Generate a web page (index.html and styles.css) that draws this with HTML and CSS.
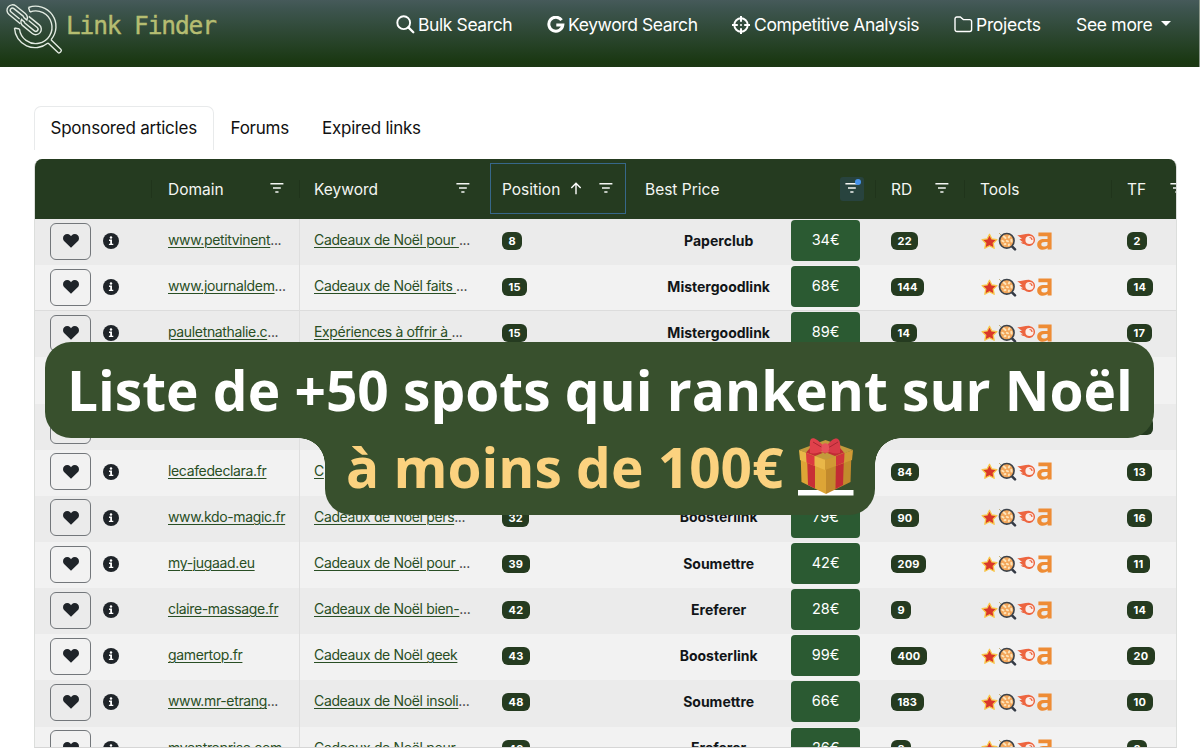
FILE: index.html
```html
<!DOCTYPE html>
<html lang="fr">
<head>
<meta charset="utf-8">
<title>Link Finder</title>
<link rel="stylesheet" href="styles.css">
</head>
<body>
<svg class="defs" width="0" height="0" aria-hidden="true">
  <symbol id="filter" viewBox="0 0 14 12"><path d="M0.4 1.7H13.4M3 5.9H10.8M5.3 10.1H8.5" stroke="currentColor" stroke-width="1.5" fill="none"/></symbol>
  <symbol id="heart" viewBox="0 0 16 14"><path d="M8 13.7 1.3 7.3C-.4 5.600-.4 2.900 1.200 1.300 2.900-.3 5.600-.3 7.200 1.300L8 2.200 8.800 1.300C10.400-.3 13.100-.3 14.800 1.300 16.400 2.900 16.400 5.600 14.700 7.300Z" fill="currentColor"/></symbol>
  <symbol id="info" viewBox="0 0 16 16"><circle cx="8" cy="8" r="8" fill="#1f2429"/><circle cx="8" cy="4.500" r="1.200" fill="#fff"/><path d="M6 6.600H9V10.700H10.300V12H5.900V10.700H7.200V7.900H6Z" fill="#fff"/></symbol>
  <symbol id="star" viewBox="0 0 16 16"><path d="M8 1.200 10.200 5.600 15 6.200 11.500 9.600 12.400 14.400 8 12 3.600 14.400 4.500 9.600 1 6.200 5.800 5.600Z" fill="#d9372a" stroke="#f8c648" stroke-width="1.200" stroke-linejoin="round"/></symbol>
  <symbol id="lens" viewBox="0 0 19 19"><path d="M13.500 13.800 17 17.300" stroke="#343a45" stroke-width="2.600" stroke-linecap="round"/><circle cx="8.800" cy="8.800" r="7.300" fill="#f3a65a" stroke="#3d434a" stroke-width="1.600"/><path d="M5.800 4.500 7.500 6M11.500 4.300 10.800 5.500M4.300 8.800 5.500 9.500M8.800 8.800 10 9.300M13.300 7.800 13.500 9.500M6.500 12.300 7.500 12M10.800 13.200 11 12.500" stroke="#fde3b8" stroke-width="2" stroke-linecap="round"/><path d="M1 1 3 3" stroke="#b8a060" stroke-width=".8"/></symbol>
  <symbol id="comet" viewBox="0 0 19 14"><path d="M.2 2.200C4.500 2.400 8 .6 12.600 .9A6.100 6.100 0 1 1 7.600 11.300C6.200 11 4.800 10.300 3.600 9.400L6 9.300C4.600 8.400 3.300 7.300 2.300 6L5 6.100C3.500 4.500 1.900 3.300.2 2.200Z" fill="#ed6540"/><circle cx="12.500" cy="7" r="4.100" fill="#fbeee9"/><path d="M12.500 4.500A2.500 2.500 0 0 1 15 7" stroke="#ed6540" stroke-width="1.200" fill="none"/></symbol>
  <symbol id="amark" viewBox="0 0 15 18"><path d="M1.400 .6H14.600V17.400H10.600V16.100C9.200 17.300 7.700 17.800 5.900 17.800 2.400 17.800.2 15.700.2 12.500.2 8.800 2.900 6.900 7.200 6.900H10.500V4.200H1.400ZM10.500 10H7.800C5.500 10 4.300 10.700 4.300 12.300 4.300 13.700 5.200 14.500 6.700 14.500 8.400 14.500 9.800 13.800 10.500 12.900Z" fill="#ee8c35" fill-rule="evenodd"/></symbol>
</svg>

<header class="topbar">
  <a class="brand">
    <svg class="brand-logo" width="58" height="51" viewBox="0 0 58 51" fill="none" stroke="#e3ebe2" stroke-width="1.400">
      <path d="M22.500 3.500A20.300 20.300 0 0 1 45 35.800M42 39A20.500 20.500 0 0 1 8.500 24"/>
      <path d="M24 8A16.300 16.300 0 1 1 13.500 25M22.500 3.500 24 8M8.500 24 13.500 25"/>
      <path d="M42 39 52 48.500C53.500 49.800 56.300 47 55 45.500L45 35.800" stroke-linejoin="round"/>
      <g transform="translate(6.500 6.300) rotate(39)">
        <path d="M14.500 5.500H0A5.500 5.500 0 0 1 0-5.500H12A5.500 5.500 0 0 1 17.300-1.500H13.500A2.300 2.300 0 0 0 12-2.200H0A2.200 2.200 0 0 0 0 2.200H11"/>
        <path d="M16.500-5.500H30A5.500 5.500 0 0 1 30 5.500H18A5.500 5.500 0 0 1 12.700 1.500H16.500A2.300 2.300 0 0 0 18 2.200H30A2.200 2.200 0 0 0 30-2.200H19"/>
      </g>
    </svg>
    <span class="brand-name">Link Finder</span>
  </a>
  <nav class="nav">
    <a class="nav-item bulk"><svg width="19" height="19" viewBox="0 0 19 19"><circle cx="7.700" cy="7.700" r="6.400" fill="none" stroke="#fff" stroke-width="1.900"/><path d="M12.400 12.400 17.300 17.300" stroke="#fff" stroke-width="2.300" stroke-linecap="round"/></svg><span>Bulk Search</span></a>
    <a class="nav-item kw"><svg width="18" height="18" viewBox="0 0 18 18"><path d="M14.600 4.200A7 7 0 1 0 15.800 9.100H9.300" fill="none" stroke="#fff" stroke-width="3"/></svg><span>Keyword Search</span></a>
    <a class="nav-item comp"><svg width="18" height="18" viewBox="0 0 18 18" fill="none" stroke="#fff"><circle cx="9" cy="9" r="6.700" stroke-width="1.900"/><path d="M9 0V5.800M9 12.200V18M0 9H5.800M12.200 9H18" stroke-width="2"/><circle cx="9" cy="9" r="1" fill="#fff" stroke="none"/></svg><span>Competitive Analysis</span></a>
    <a class="nav-item proj"><svg width="19" height="17" viewBox="0 0 19 17"><path d="M1 3A1.900 1.900 0 0 1 2.900 1H6.300L9.300 3.600H15.700A2 2 0 0 1 17.600 5.600V13.500A2 2 0 0 1 15.700 15.500H3A2 2 0 0 1 1 13.500Z" fill="none" stroke="#fff" stroke-width="1.400"/></svg><span>Projects</span></a>
    <a class="nav-item more"><span>See more</span><i class="caret"></i></a>
  </nav>
</header>

<main class="page">
  <div class="tabs">
    <a class="tab active"><span>Sponsored articles</span></a>
    <a class="tab"><span>Forums</span></a>
    <a class="tab"><span>Expired links</span></a>
  </div>

  <section class="grid">
    <div class="grid-head">
      <div class="hcell"></div>
      <div class="hcell"><span>Domain</span><svg class="filter"><use href="#filter"/></svg></div>
      <div class="hcell"><span>Keyword</span><svg class="filter"><use href="#filter"/></svg></div>
      <div class="hcell sorted"><span>Position</span><svg class="arrow" width="12" height="13" viewBox="0 0 12 13"><path d="M6 12.300V1.300M1.300 6 6 1.300 10.700 6" fill="none" stroke="#fff" stroke-width="1.400"/></svg><svg class="filter"><use href="#filter"/></svg></div>
      <div class="hcell"><span>Best Price</span><div class="filter-on"><svg class="filter"><use href="#filter"/></svg></div></div>
      <div class="hcell"><span>RD</span><svg class="filter"><use href="#filter"/></svg></div>
      <div class="hcell"><span>Tools</span></div>
      <div class="hcell"><span>TF</span><svg class="filter"><use href="#filter"/></svg></div>
    </div>
    <div class="grid-body" id="rows"></div>
  </section>
</main>

<div class="banner">
  <div class="banner-top">Liste de +50 spots qui rankent sur Noël</div>
  <div class="banner-bottom">
    <span>à moins de 100€</span>
    <svg class="gift" width="56" height="58" viewBox="0 0 56 58">
      <rect x="0" y="52" width="55.500" height="5.500" fill="#fff"/>
      <path d="M1 12 27.500 2 55 12 28 23Z" fill="#c39a3c"/>
      <path d="M2.500 13 28 22V56L3.500 44Z" fill="#dda536"/>
      <path d="M53.500 13 28 22V56L52.500 44Z" fill="#c28a2c"/>
      <path d="M9 17 17 20V50.500L10 47Z" fill="#c82f36"/>
      <path d="M38 20 46 17 45 47 37.500 51Z" fill="#c32b34"/>
      <path d="M1 12 27 22V32L2 22Z" fill="#e9b748"/>
      <path d="M55 12 27 22V32L54 22Z" fill="#d09a34"/>
      <path d="M8 14.700 16.500 18V28L8.500 24.500Z" fill="#dc3a40"/>
      <path d="M38 18 46.500 14.700 46 24.500 38 28Z" fill="#d2343c"/>
      <path d="M12 10 27 15.500 42 10 46 14.500 37 18 27 14 17 18 8 14.500Z" fill="#c02c35"/>
      <path d="M26 9C20 1 15-1 13 1 11 3 12 12 12 15 16 16 22 15 26 12Z" fill="#e0414b"/>
      <path d="M28 9C34 0 39-1 41 2 43 5 42 13 42 15 37 16 32 15 28 12Z" fill="#d83b48"/>
      <path d="M15 4 25 10M40 4 30 10" stroke="#a92632" stroke-width="1"/>
      <ellipse cx="27.300" cy="10" rx="4" ry="4.800" fill="#e8525b"/>
    </svg>
  </div>
</div>
<script src="rows.js"></script>
</body>
</html>
```
FILE: styles.css
```css
* { box-sizing: border-box; }
html, body { margin: 0; height: 748px; overflow: hidden; }
body { position: relative; background: #fff; font-family: Inter, Roboto, sans-serif; color: #111; }
.defs { position: absolute; }

.topbar { height: 67px; display: flex; align-items: flex-start; background: linear-gradient(#465a5a 0, #3e5550 12%, #1a3812 92%, #1b3613 100%); color: #fff; border-right: 1px solid #8b988b; }
.brand { display: flex; width: 396px; padding: 4px 0 0 6px; }
.brand-name { margin-left: 2px; font: 24.500px/44px "DejaVu Sans Mono", monospace; letter-spacing: -1.130px; color: #b5bd71; -webkit-text-stroke: .4px #b5bd71; white-space: nowrap; }
.nav { display: flex; height: 49px; align-items: center; font-size: 17.500px; white-space: nowrap; }
.nav-item { display: flex; align-items: center; gap: 3px; flex: none; }
.nav-item span { letter-spacing: -.4px; }
.nav-item span { margin-top: -1px; }
.bulk { width: 151px; }
.kw { width: 185px; }
.comp { width: 222px; gap: 4px; }
.proj { width: 122px; }
.proj span, .more span { letter-spacing: -.3px; }
.caret { margin-left: 6px; margin-top: -2px; border: 5px solid transparent; border-top-color: #fff; border-bottom: 0; }

.page { padding: 39px 23px 0 34px; }
.tabs { display: flex; height: 44px; font-size: 17px; line-height: 40px; color: #111; white-space: nowrap; letter-spacing: -.23px; }
.tab { padding: 1px 15.500px; border: 1px solid transparent; border-bottom: 0; }
.tab.active { width: 180px; border-color: #e8eaeb; border-radius: 7px 7px 0 0; }
.tab span { display: block; }

.grid { margin-top: 9px; height: 589px; border: 1px solid #dcdedc; border-top: 0; border-radius: 8px 8px 0 0; overflow: hidden; border-bottom-color: #d6d6d6; }
.grid-head, .row { display: grid; grid-template-columns: 117px 148px 188px 142px 246px 89px 147px 80px; width: 1157px; }
.grid-head { height: 60px; background: #253b20; color: #f4f6f3; font-size: 15.500px; }
.hcell { display: flex; align-items: center; padding: 0 16px 0 15px; position: relative; }
.hcell:nth-child(2) { padding-left: 16px; }
.hcell:nth-child(3) { padding-left: 14px; }
.hcell:not(.sorted):not(:nth-child(3)):not(:last-child)::after { content: ""; position: absolute; right: 0; top: 21px; width: 1px; height: 18px; background: #20341b; }
.filter { width: 14px; height: 12px; margin-left: auto; flex: none; margin-top: -2px; }
.hcell:nth-child(3) .filter { margin-right: 2px; }
.hcell:nth-child(8) .filter { margin-right: -8px; }
.sorted { border: 1px solid #37678a; margin: 4px 4px 5px 2px; padding: 1px 12px 0 11px; }
.arrow { margin-left: 10px; margin-top: -2px; }
.filter-on { margin-left: auto; margin-right: -4px; width: 24px; height: 24px; border-radius: 3px; background: #28433e; position: relative; display: flex; align-items: center; justify-content: center; }
.filter-on .filter { margin: -2px 0 0; }
.filter-on::after { content: ""; position: absolute; right: 3px; top: 2px; width: 6px; height: 6px; border-radius: 50%; background: #4693ec; }

.row { height: 46.150px; background: #f2f2f2; font-size: 14px; }
.row:nth-child(odd) { background: #ebebeb; }
.row:nth-child(3) { box-shadow: 0 -1px #dcdcdc; }
.cell { display: flex; align-items: center; padding: 0 15px 2px; white-space: nowrap; }
.cell:nth-child(2), .cell:nth-child(3) { padding: 0 0 5px 16px; letter-spacing: -.35px; }
.cell:nth-child(2) { border-right: 1px solid #dedede; }
.cell:nth-child(3) { padding-left: 14px; }
.like { width: 41px; height: 37px; border: 1px solid #73777b; border-radius: 6px; display: flex; align-items: center; justify-content: center; color: #1f2429; }
.like svg { width: 16px; height: 14px; }
.info { width: 16px; height: 16px; margin-left: 12px; }
.link { color: #294e24; text-decoration: underline; text-decoration-thickness: 1px; text-underline-offset: 2px; white-space: pre; }
.dots { color: #333; }
.badge { height: 18px; min-width: 20px; padding: 0 6.500px; border-radius: 6px; background: #253b20; color: #fff; font-weight: 700; font-size: 11px; line-height: 18px; text-align: center; letter-spacing: .2px; }
.badge:empty { width: 26px; }
.pos .badge { margin-left: -1px; }
.cell.best { padding: 0 16px 3px 0; }
.vendor { width: 146px; margin-left: 16px; text-align: center; font-weight: 700; color: #111518; font-size: 14px; padding-bottom: 1px; }
.price { width: 69px; height: 41px; margin-left: auto; border-radius: 4px; background: #2b5a32; color: #fff; font-size: 14.500px; line-height: 40px; text-align: center; }
.cell.tools { padding-left: 16px; }
.t-star { width: 17px; height: 17px; }
.t-lens { width: 19px; height: 19px; }
.t-comet { width: 19px; height: 14px; margin-top: -2px; }
.t-a { width: 15px; height: 18px; margin-left: 1px; margin-top: -1px; }

.banner { position: absolute; left: 45px; top: 342px; width: 1109px; font-family: "Open Sans", "Noto Sans", sans-serif; font-weight: 700; font-size: 55px; white-space: nowrap; }
.banner-top { height: 96px; padding-left: 22px; border-radius: 26px; background: #38502d; color: #fff; line-height: 95px; }
.banner-bottom { position: relative; width: 550px; height: 77px; margin-left: 280px; padding-left: 21px; display: flex; border-radius: 0 0 26px 26px; background: #38502d; color: #fbd27f; line-height: 58px; }
.banner-bottom::before, .banner-bottom::after { content: ""; position: absolute; top: 0; width: 26px; height: 26px; }
.banner-bottom::before { left: -26px; background: radial-gradient(circle at 0 100%, transparent 25.500px, #38502d 26px); }
.banner-bottom::after { right: -26px; background: radial-gradient(circle at 100% 100%, transparent 25.500px, #38502d 26px); }
.banner-bottom span { width: 452px; }
.gift { overflow: visible; }
```
FILE: rows.js
```js
const rows = [
  ["www.petitvinent", 1, "Cadeaux de Noël pour ", 1, "8", "Paperclub", "34€", "22", "2"],
  ["www.journaldem", 1, "Cadeaux de Noël faits ", 1, "15", "Mistergoodlink", "68€", "144", "14"],
  ["pauletnathalie.c", 1, "Expériences à offrir à ", 1, "15", "Mistergoodlink", "89€", "14", "17"],
  ["", 0, "", 0, "", "", "", "", ""],
  ["", 0, "", 0, "", "", "", "", ""],
  ["lecafedeclara.fr", 0, "C", 0, "", "", "", "84", "13"],
  ["www.kdo-magic.fr", 0, "Cadeaux de Noël pers", 1, "32", "Boosterlink", "79€", "90", "16"],
  ["my-jugaad.eu", 0, "Cadeaux de Noël pour ", 1, "39", "Soumettre", "42€", "209", "11"],
  ["claire-massage.fr", 0, "Cadeaux de Noël bien-", 1, "42", "Ereferer", "28€", "9", "14"],
  ["gamertop.fr", 0, "Cadeaux de Noël geek", 0, "43", "Boosterlink", "99€", "400", "20"],
  ["www.mr-etrang", 1, "Cadeaux de Noël insoli", 1, "48", "Soumettre", "66€", "183", "10"],
  ["myentreprise.com", 0, "Cadeaux de Noël pour ", 1, "49", "Ereferer", "26€", "8", "8"]
];
const icon = (cls, id) => `<svg class="${cls}"><use href="#${id}"/></svg>`;
const link = (text, cut) => `<span class="link">${text}</span>${cut ? '<span class="dots">...</span>' : ""}`;
const badge = (n) => `<span class="badge">${n}</span>`;
document.getElementById("rows").innerHTML = rows.map(r => `<div class="row">
  <div class="cell"><span class="like">${icon("", "heart")}</span>${icon("info", "info")}</div>
  <div class="cell">${link(r[0], r[1])}</div>
  <div class="cell">${link(r[2], r[3])}</div>
  <div class="cell pos">${badge(r[4])}</div>
  <div class="cell best"><span class="vendor">${r[5]}</span><span class="price">${r[6]}</span></div>
  <div class="cell">${badge(r[7])}</div>
  <div class="cell tools">${icon("t-star", "star")}${icon("t-lens", "lens")}${icon("t-comet", "comet")}${icon("t-a", "amark")}</div>
  <div class="cell">${badge(r[8])}</div>
</div>`).join("");
```
